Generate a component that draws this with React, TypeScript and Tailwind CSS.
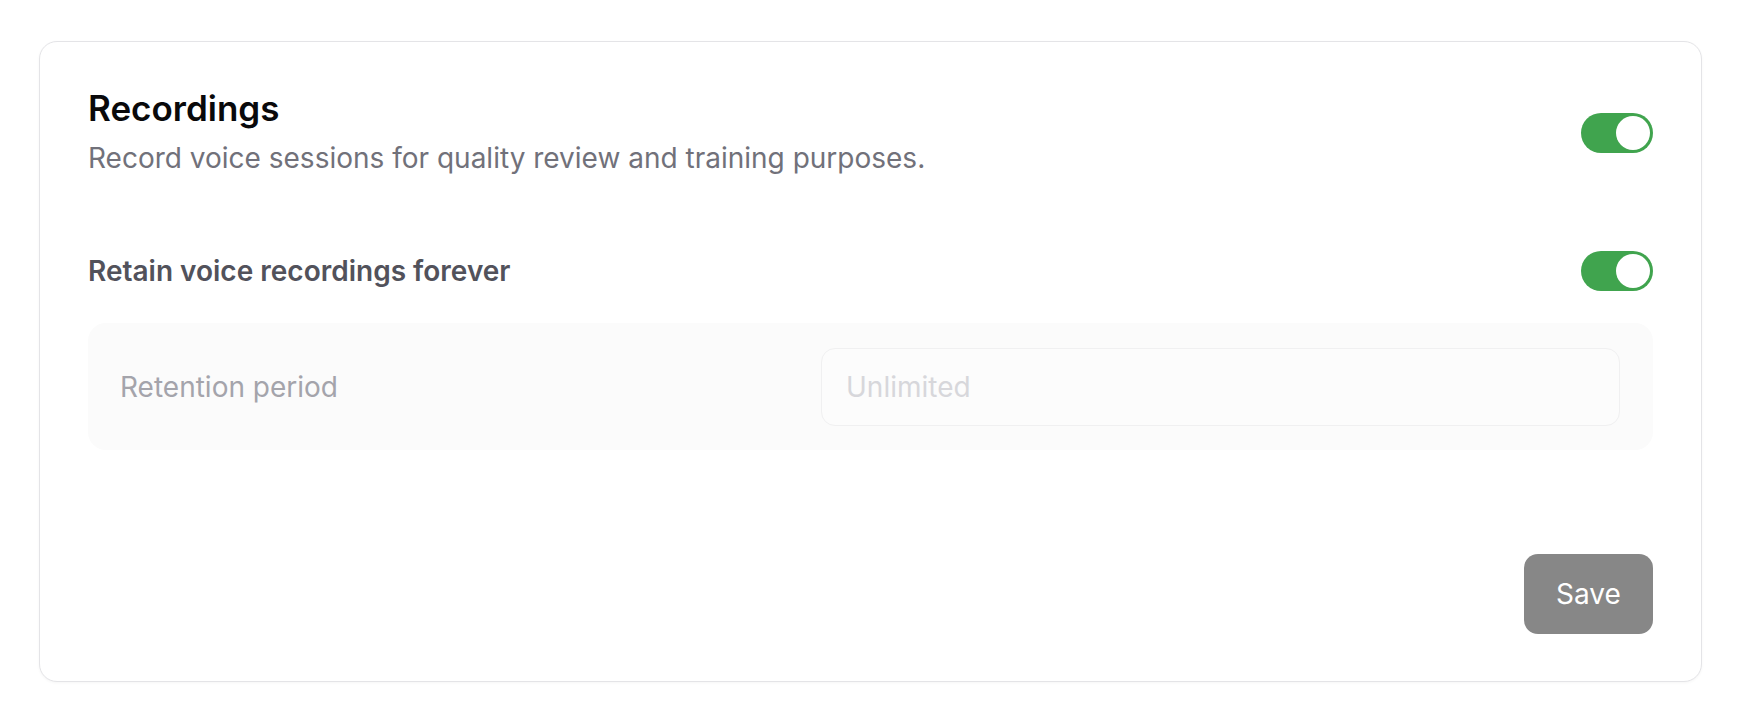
import React from "react";

function Toggle() {
  return (
    <div className="flex h-[40px] w-[72px] shrink-0 items-center justify-end rounded-full bg-[#40a44e] p-[3px]">
      <div className="h-[34px] w-[34px] rounded-full bg-white" />
    </div>
  );
}

export default function App() {
  return (
    <div
      className="min-h-[724px] w-full bg-white pl-[39px] pt-[41px]"
      style={{ fontFamily: "Inter, 'Noto Sans', sans-serif" }}
    >
      <div className="flex h-[641px] w-[1663px] flex-col rounded-[18px] border border-[#e4e4e7] bg-white px-[48px] pb-[47px] pt-[46px] shadow-[0_1px_3px_rgba(0,0,0,0.04)]">
        <div className="flex items-start justify-between">
          <div className="flex flex-col">
            <h2 className="text-[35px] font-semibold leading-[40px] text-[#09090b]">Recordings</h2>
            <p className="mt-[14px] text-[28px] leading-[32px] text-[#71717a]">
              Record voice sessions for quality review and training purposes.
            </p>
          </div>
          <div className="mt-[25px]">
            <Toggle />
          </div>
        </div>

        <div className="mt-[77px] flex h-[40px] items-center justify-between">
          <span className="text-[28px] font-semibold leading-[36px] text-[#52525b]">
            Retain voice recordings forever
          </span>
          <Toggle />
        </div>

        <div className="mt-[32px] flex h-[127px] items-center justify-between rounded-[18px] bg-[#fbfbfb] pl-[32px] pr-[33px]">
          <span className="text-[28px] leading-[36px] text-[#a4a4ab]">Retention period</span>
          <div className="flex h-[78px] w-[799px] items-center rounded-[14px] border border-[#f0f0f1] bg-[#fcfcfc] pl-[24px] text-[28px] text-[#d7d7db]">
            Unlimited
          </div>
        </div>

        <div className="mt-auto flex justify-end">
          <button className="flex h-[80px] w-[129px] items-center justify-center rounded-[14px] bg-[#878787] text-[28px] text-white">
            Save
          </button>
        </div>
      </div>
    </div>
  );
}
